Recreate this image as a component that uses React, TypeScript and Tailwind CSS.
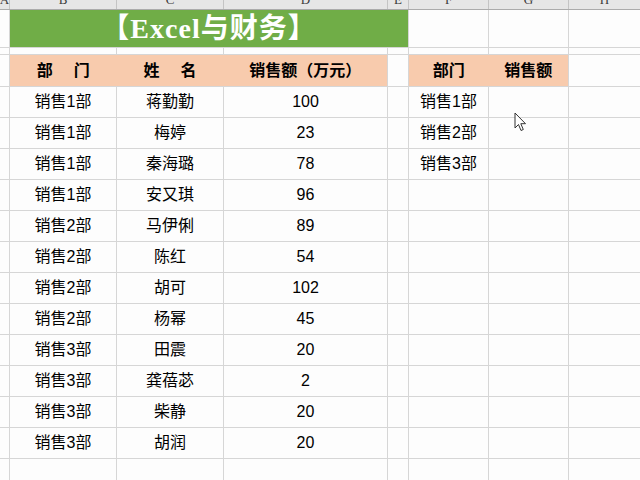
import * as React from 'react'

const FONT = { fontFamily: '"Liberation Sans","Noto Sans CJK SC",sans-serif' }

const rows: [string, string, string][] = [
  ['销售1部', '蒋勤勤', '100'],
  ['销售1部', '梅婷', '23'],
  ['销售1部', '秦海璐', '78'],
  ['销售1部', '安又琪', '96'],
  ['销售2部', '马伊俐', '89'],
  ['销售2部', '陈红', '54'],
  ['销售2部', '胡可', '102'],
  ['销售2部', '杨幂', '45'],
  ['销售3部', '田震', '20'],
  ['销售3部', '龚蓓苾', '2'],
  ['销售3部', '柴静', '20'],
  ['销售3部', '胡润', '20'],
]

const summary = ['销售1部', '销售2部', '销售3部']

const cell = 'shrink-0 border-r border-b border-[#d6d6d6] flex items-center justify-center'

function ColHeader() {
  const letters: [string, string][] = [
    ['A', 'w-[10px]'],
    ['B', 'w-[107px]'],
    ['C', 'w-[107px]'],
    ['D', 'w-[164px]'],
    ['E', 'w-[21px]'],
    ['F', 'w-[80px]'],
    ['G', 'w-[80px]'],
  ]
  return (
    <div className="flex h-[10px] overflow-hidden border-b border-[#ababab] bg-[#e6e6e6] text-[13px] text-[#3a3a3a]" style={{ fontFamily: '"Liberation Serif",serif' }}>
      {letters.map(([l, w]) => (
        <div key={l} className={`${w} shrink-0 border-r border-[#c4c4c4] flex justify-center`}>
          <span className="-mt-[8px] leading-[16px]">{l}</span>
        </div>
      ))}
      <div className="flex flex-1 justify-center">
        <span className="-mt-[8px] leading-[16px]">H</span>
      </div>
    </div>
  )
}

function RightCols() {
  return (
    <>
      <div className={`${cell} w-[80px]`} />
      <div className={`${cell} w-[80px]`} />
      <div className="flex-1 border-b border-[#d6d6d6]" />
    </>
  )
}

export default function App() {
  return (
    <div className="relative h-[480px] w-[640px] overflow-hidden bg-[#fdfdfd] text-black" style={FONT}>
      <ColHeader />

      {/* title row */}
      <div className="flex h-[38px]">
        <div className={`${cell} w-[10px]`} />
        <div className="flex w-[399px] shrink-0 items-center justify-center border-b border-r border-[#d6d6d6] bg-[#70ad47]">
          <span
            className="text-[28px] font-bold tracking-[1px] text-white"
            style={{ fontFamily: '"Liberation Serif","Noto Sans CJK SC",serif' }}
          >
            【Excel与财务】
          </span>
        </div>
        <RightCols />
      </div>

      {/* spacer row */}
      <div className="flex h-[7px]">
        <div className={`${cell} w-[10px]`} />
        <div className={`${cell} w-[107px]`} />
        <div className={`${cell} w-[107px]`} />
        <div className={`${cell} w-[164px]`} />
        <div className={`${cell} w-[21px]`} />
        <RightCols />
      </div>

      {/* table header */}
      <div className="flex h-[32px] text-[16px] font-bold">
        <div className={`${cell} w-[10px]`} />
        <div className="flex w-[378px] shrink-0 border-b border-r border-[#d6d6d6] bg-[#f8cbad]">
          <div className="flex w-[107px] items-center justify-center gap-[21px]">
            <span>部</span>
            <span>门</span>
          </div>
          <div className="flex w-[107px] items-center justify-center gap-[21px]">
            <span>姓</span>
            <span>名</span>
          </div>
          <div className="flex w-[164px] items-center justify-center">销售额（万元）</div>
        </div>
        <div className={`${cell} w-[21px]`} />
        <div className="flex w-[160px] shrink-0 border-b border-r border-[#d6d6d6] bg-[#f8cbad]">
          <div className="flex w-[80px] items-center justify-center">部门</div>
          <div className="flex w-[80px] items-center justify-center">销售额</div>
        </div>
        <div className="flex-1 border-b border-[#d6d6d6]" />
      </div>

      {rows.map(([dept, name, amt], i) => (
        <div key={i} className="flex h-[31px] text-[16px]">
          <div className={`${cell} w-[10px]`} />
          <div className={`${cell} w-[107px]`}>{dept}</div>
          <div className={`${cell} w-[107px]`}>{name}</div>
          <div className={`${cell} w-[164px]`}>{amt}</div>
          <div className={`${cell} w-[21px]`} />
          <div className={`${cell} w-[80px]`}>{summary[i] ?? ''}</div>
          <div className={`${cell} w-[80px]`} />
          <div className="flex-1 border-b border-[#d6d6d6]" />
        </div>
      ))}

      <div className="flex h-[31px]">
        <div className={`${cell} w-[10px]`} />
        <div className={`${cell} w-[107px]`} />
        <div className={`${cell} w-[107px]`} />
        <div className={`${cell} w-[164px]`} />
        <div className={`${cell} w-[21px]`} />
        <RightCols />
      </div>

      {/* mouse pointer */}
      <svg className="absolute left-[514px] top-[112px]" width="14" height="21" viewBox="0 0 14 21">
        <path
          d="M1 1 L1 16 L4.5 12.5 L7 18.5 L9.3 17.5 L6.8 11.7 L11.5 11.7 Z"
          fill="#ffffff"
          stroke="#333333"
          strokeWidth="1"
          strokeLinejoin="miter"
        />
      </svg>
    </div>
  )
}
